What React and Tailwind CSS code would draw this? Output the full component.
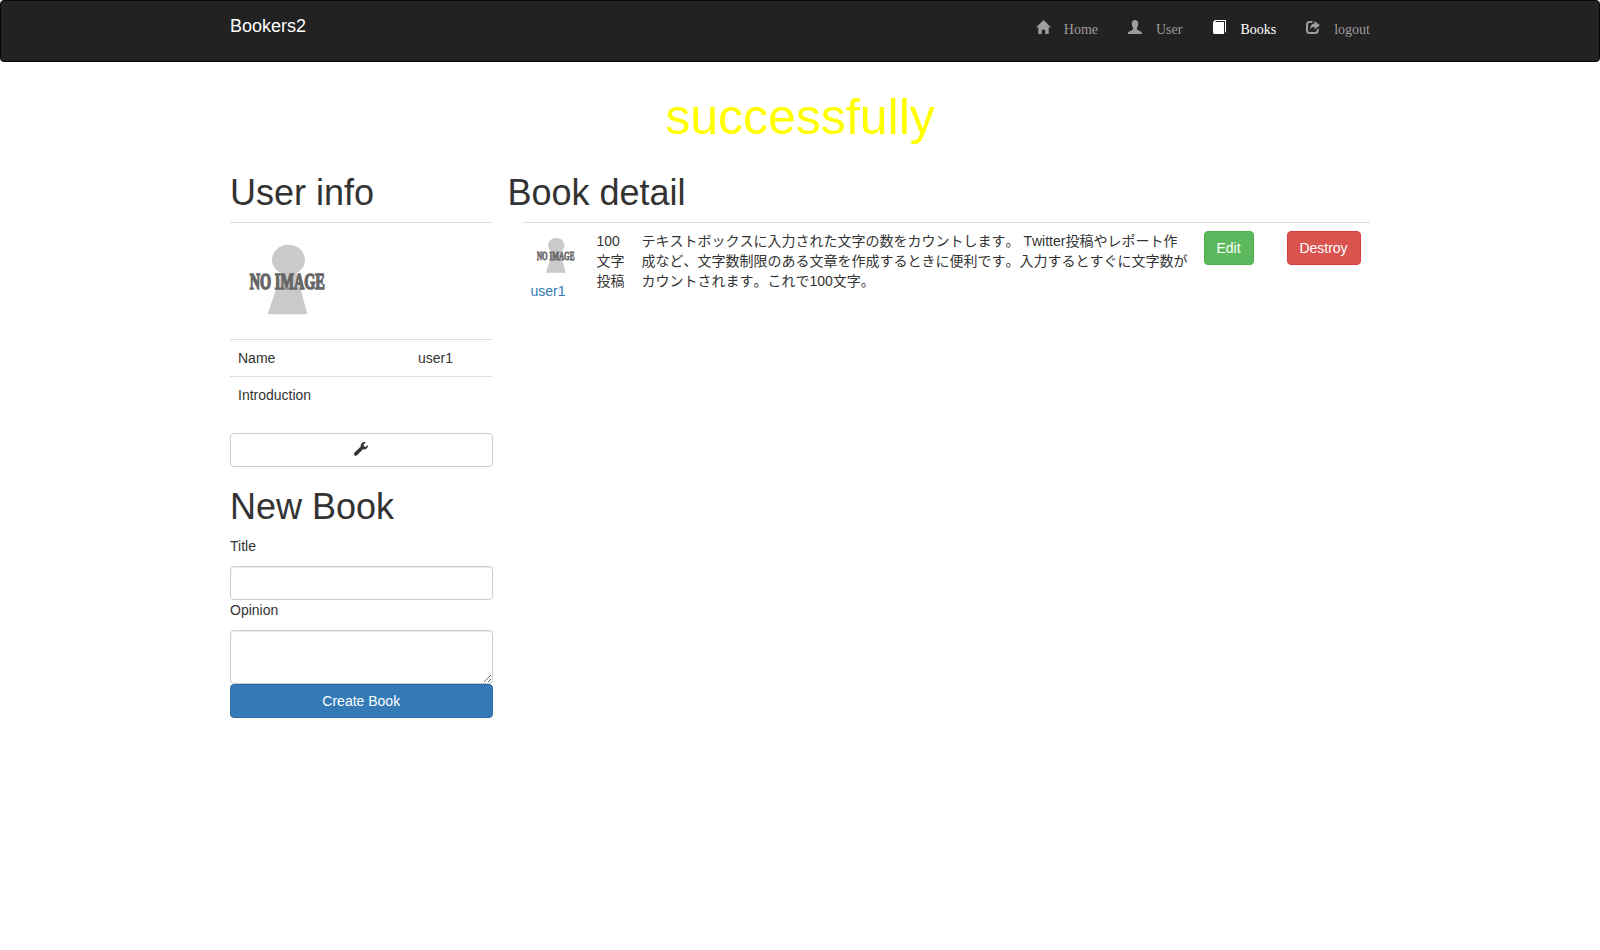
import React from 'react';

const sans = "font-['Liberation_Sans','Noto_Sans_CJK_JP',sans-serif]";

function HomeIcon() {
  return (
    <svg className="block h-[15px] w-[15px]" viewBox="0 0 1300 1300" fill="currentColor">
      <path d="M1 645L657 1L1301 645H1101V1215H801V845H501V1215H201V645Z" />
    </svg>
  );
}

function UserIcon() {
  return (
    <svg className="block h-[14px] w-[14px]" viewBox="0 0 14 14" fill="currentColor">
      <path d="M7 0C9 0 10.2 1.3 10.2 3.5C10.2 5.2 9.8 6.8 8.9 7.8V9.1C8.9 9.6 9.2 9.9 9.7 10.1L12.6 11.4C13.5 11.8 14 12.4 14 13.2V14H0V13.2C0 12.4.5 11.8 1.4 11.4L4.3 10.1C4.8 9.9 5.1 9.6 5.1 9.1V7.8C4.2 6.8 3.8 5.2 3.8 3.5C3.8 1.3 5 0 7 0Z" />
    </svg>
  );
}

function BookIcon() {
  return (
    <svg className="ml-[0.6px] block h-[14px] w-[14px]" viewBox="0 0 14 14" fill="currentColor">
      <path d="M2 0H13V12L12 12.7V1H3L2.2 2H11V14H1L0 13V2Z" />
    </svg>
  );
}

function ShareIcon() {
  return (
    <svg className="block h-[14px] w-[14px]" viewBox="0 0 14 14" fill="currentColor">
      <path d="M8.6 1L14 5.2L8.6 9.4V7C6.8 7 5.5 7.6 4 9.4C4.2 5.8 5.8 3.6 8.6 3.3Z" />
      <path d="M7.4 1H3.4C1.2 1 0 2.3 0 4.4V10.6C0 12.8 1.2 14 3.4 14H9.4C11.6 14 12.8 12.8 12.8 10.6V8.2L10.7 9.8V10.6C10.7 11.5 10.3 11.9 9.4 11.9H3.4C2.5 11.9 2.1 11.5 2.1 10.6V4.4C2.1 3.5 2.5 3.1 3.4 3.1H5.4Z" />
    </svg>
  );
}

function WrenchIcon() {
  return (
    <svg className="block h-[14px] w-[14px]" viewBox="0 0 14 14" fill="currentColor">
      <path d="M11.9 .3C10.3-.3 8.3.2 7.3 1.7C6.7 2.6 6.6 3.6 6.8 4.6L.5 10.6C-.2 11.3-.2 12.5.5 13.2C1.2 14 2.3 14 3 13.3L9 7.3C10.1 7.6 11.3 7.5 12.3 6.8C13.6 5.9 14.3 4.3 13.8 2.9L11.9 4.8L10 4.4L9.5 2.5Z" />
    </svg>
  );
}

function NoImage({ className }) {
  return (
    <svg className={className} viewBox="0 0 100 100">
      <path d="M44 40H58L69.3 83.3H29.7Z" fill="#cacaca" />
      <ellipse cx="50.5" cy="28.8" rx="16.5" ry="15" fill="#cacaca" />
      <text
        transform="translate(11.8 58.3) scale(0.622 1)"
        fontSize="23"
        fontWeight="700"
        fontFamily="Liberation Serif, serif"
        fill="#666"
        stroke="#666"
        strokeWidth="1.5"
      >
        NO IMAGE
      </text>
    </svg>
  );
}

const links = [
  { label: 'Home', Icon: HomeIcon },
  { label: 'User', Icon: UserIcon },
  { label: 'Books', Icon: BookIcon, active: true },
  { label: 'logout', Icon: ShareIcon },
];

const heading = 'text-[36px] font-normal leading-[39.6px]';
const field =
  'block w-full rounded border border-[#ccc] bg-white px-3 py-1.5 shadow-[inset_0_1px_1px_rgba(0,0,0,0.075)] outline-none';

export default function App() {
  return (
    <div className={`min-h-[950px] bg-white text-sm leading-5 text-[#333] ${sans}`}>
      <nav className="h-[62px] rounded border border-[#080808] bg-[#222]">
        <div className="mx-auto flex w-[1140px] justify-between">
          <a className="pt-[15px] text-[18px] leading-5 text-white">Bookers2</a>
          <ul className="flex gap-[30px] pt-[19px] font-['Liberation_Serif',serif]">
            {links.map(({ label, Icon, active }) => (
              <li key={label} className={active ? 'flex text-white' : 'flex text-[#9d9d9d]'}>
                <span className="w-7">
                  <Icon />
                </span>
                <span className="pt-[3px] leading-[14px]">{label}</span>
              </li>
            ))}
          </ul>
        </div>
      </nav>

      <main className="mx-auto w-[1140px]">
        <p className="pt-[19.5px] text-center text-[50px] leading-[71.4px] text-[#ff0]">successfully</p>
        <div className="flex gap-[15px] pt-[19.8px]">
          <section className="w-[262.5px] shrink-0">
            <h2 className={heading}>User info</h2>
            <table className="mt-[9.7px] mb-5 w-[262px] border-collapse">
              <tbody>
                <tr className="h-[117px] border-t border-[#ddd]">
                  <td className="w-[180px] p-2 align-top">
                    <NoImage className="block size-[100px]" />
                  </td>
                  <td />
                </tr>
                <tr className="h-[37px] border-t border-[#ddd]">
                  <td className="p-2">Name</td>
                  <td className="p-2">user1</td>
                </tr>
                <tr className="h-[37px] border-t border-[#ddd]">
                  <td className="p-2">Introduction</td>
                  <td />
                </tr>
              </tbody>
            </table>
            <button className="flex h-[34px] w-full justify-center rounded border border-[#ccc] bg-white pt-2">
              <WrenchIcon />
            </button>
            <h2 className={`mt-5 mb-[9.4px] ${heading}`}>New Book</h2>
            <form>
              <label className="mb-2.5 block">Title</label>
              <input className={`h-[34px] ${field}`} />
              <label className="mb-2.5 block">Opinion</label>
              <textarea className={`h-[54px] resize ${field}`} />
              <button
                type="button"
                className="block h-[34px] w-full rounded border border-[#2e6da4] bg-[#337ab7] text-center text-white"
              >
                Create Book
              </button>
            </form>
          </section>

          <section className="grow">
            <h2 className={heading}>Book detail</h2>
            <div className="mt-[9.7px] ml-[15px] flex border-t border-[#ddd] pt-2">
              <div className="w-[66px] shrink-0 px-2">
                <NoImage className="block size-[50px]" />
                <a className="block text-[#337ab7]">user1</a>
              </div>
              <div className="w-[45px] shrink-0 px-2">100文字投稿</div>
              <div className="w-[562px] shrink-0 px-2 [font-kerning:none]">
                テキストボックスに入力された文字の数をカウントします。 Twitter投稿やレポート作成など、文字数制限のある文章を作成するときに便利です。入力するとすぐに文字数がカウントされます。これで100文字。
              </div>
              <div className="w-[83px] shrink-0 px-2">
                <button className="h-[34px] w-[50px] rounded border border-[#4cae4c] bg-[#5cb85c] text-white">
                  Edit
                </button>
              </div>
              <div className="shrink-0 px-2">
                <button className="h-[34px] w-[74px] rounded border border-[#d43f3a] bg-[#d9534f] text-white">
                  Destroy
                </button>
              </div>
            </div>
          </section>
        </div>
      </main>
    </div>
  );
}
